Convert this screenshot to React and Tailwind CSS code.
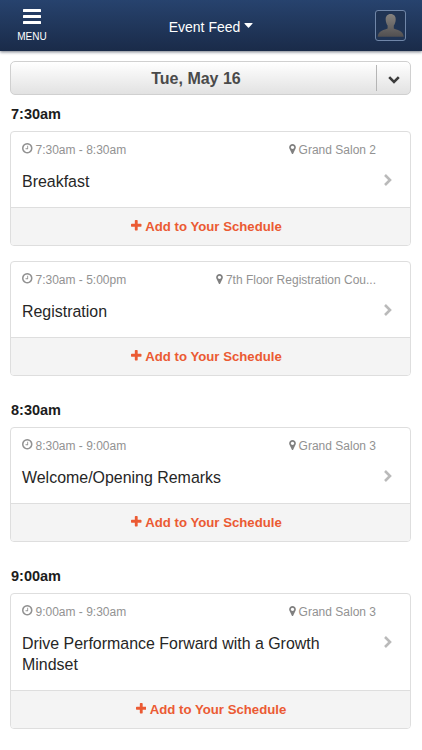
const groups = [
  {
    time: '7:30am',
    events: [
      { time: '7:30am - 8:30am', place: 'Grand Salon 2', title: 'Breakfast' },
      { time: '7:30am - 5:00pm', place: '7th Floor Registration Cou...', title: 'Registration' }
    ]
  },
  {
    time: '8:30am',
    events: [{ time: '8:30am - 9:00am', place: 'Grand Salon 3', title: 'Welcome/Opening Remarks' }]
  },
  {
    time: '9:00am',
    events: [{ time: '9:00am - 9:30am', place: 'Grand Salon 3', title: 'Drive Performance Forward with a Growth Mindset', wide: true }]
  }
]

const ClockIcon = () => (
  <svg viewBox="128 128 1536 1536" className="w-[10.5px] h-[10.5px] mb-[2px] shrink-0" fill="currentColor">
    <path d="M1024 544v448q0 14-9 23t-23 9h-320q-14 0-23-9t-9-23v-64q0-14 9-23t23-9h224v-352q0-14 9-23t23-9h64q14 0 23 9t9 23zm416 352q0-148-73-273t-198-198-273-73-273 73-198 198-73 273 73 273 198 198 273 73 273-73 198-198 73-273zm224 0q0 209-103 385.5t-279.5 279.5-385.5 103-385.5-103-279.5-279.5-103-385.5 103-385.5 279.5-279.5 385.5-103 385.5 103 279.5 279.5 103 385.5z" />
  </svg>
)

const MarkerIcon = () => (
  <svg viewBox="384 128 1024 1536" className="w-[7px] h-[10px] mb-[2px] shrink-0 text-[#808080]" fill="currentColor">
    <path d="M1152 640q0-106-75-181t-181-75-181 75-75 181 75 181 181 75 181-75 75-181zm256 0q0 109-33 179l-364 774q-16 33-47.5 52t-67.5 19-67.5-19-46.5-52l-365-774q-33-70-33-179 0-212 150-362t362-150 362 150 150 362z" />
  </svg>
)

const PlusIcon = () => (
  <svg viewBox="192 128 1408 1408" className="w-[10.5px] h-[10.5px] mb-[3px] shrink-0" fill="currentColor">
    <path d="M1600 736v192q0 40-28 68t-68 28h-416v416q0 40-28 68t-68 28h-192q-40 0-68-28t-28-68v-416h-416q-40 0-68-28t-28-68v-192q0-40 28-68t68-28h416v-416q0-40 28-68t68-28h192q40 0 68 28t28 68v416h416q40 0 68 28t28 68z" />
  </svg>
)

const Header = () => (
  <header className="h-[51px] flex items-center justify-between bg-linear-to-b from-[#27436e] to-[#1a2b49] text-white shadow-[0_1px_3px_rgba(20,30,50,0.6)]">
    <button className="w-16 h-full pt-[9px] flex flex-col items-center">
      <svg viewBox="0 0 18 15" className="w-[18px] h-[15px]" fill="currentColor">
        <rect width="18" height="3" rx="0.6" />
        <rect y="6" width="18" height="3" rx="0.6" />
        <rect y="12" width="18" height="3" rx="0.6" />
      </svg>
      <span className="mt-[6px] text-[10px] leading-[13px]">MENU</span>
    </button>
    <div className="flex items-center gap-1 pt-[3px] text-[14px]">
      <span>Event Feed</span>
      <svg viewBox="0 0 10 6" className="w-[9px] h-[5px] mb-[3px]" fill="currentColor">
        <path d="M0.6 0h8.8q.9.2.3 1L5.6 5.3q-.6.6-1.2 0L.3 1Q-.3.2.6 0z" />
      </svg>
    </div>
    <div className="w-16 flex justify-center">
      <div className="w-[31px] h-[31px] ml-[1px] rounded-[3px] border border-[#7086a8] bg-[#203454] overflow-hidden">
        <svg viewBox="0 0 29 29" className="w-full h-full">
          <defs>
            <linearGradient id="avatar" x1="0" y1="0" x2="0" y2="1">
              <stop offset="0" stopColor="#85827f" />
              <stop offset="1" stopColor="#514f50" />
            </linearGradient>
          </defs>
          <path d="M14.7 3c3.3 0 5.200 2.200 5 5.800-.1 2.600-.9 4.400-1.900 5.700v3c2.600 1.500 9.700 2 9.900 8.300H1.700c.2-6.300 7.300-6.800 9.900-8.300v-3c-1-1.300-1.800-3.100-1.900-5.700C9.500 5.200 11.400 3 14.700 3z" fill="url(#avatar)" />
        </svg>
      </div>
    </div>
  </header>
)

const DatePicker = () => (
  <div className="h-[34px] flex items-center rounded-[5px] border border-[#d0d0d0] bg-linear-to-b from-white to-[#e2e2e2]">
    <span className="flex-1 pl-[5px] pt-[2px] text-center text-[16px] font-bold text-[#4a4a4a]">Tue, May 16</span>
    <div className="w-[34px] h-[26px] flex items-center justify-center border-l border-[#b5b5b5]">
      <svg viewBox="0 0 12 8" className="w-3 h-2 mt-[3px]" fill="none" stroke="#3b3b3b" strokeWidth="2.6">
        <path d="M1.2 1.2L6 6l4.8-4.8" />
      </svg>
    </div>
  </div>
)

const EventCard = ({ time, place, title, wide }) => (
  <article className="rounded-[4px] border border-[#dedede] bg-white overflow-hidden">
    <div className="relative px-[11px] pt-[10px] pb-[15px]">
      <div className="h-[15px] pr-[23px] flex items-center justify-between text-[12px] text-[#929292]">
        <span className="flex items-center gap-[3px]"><ClockIcon />{time}</span>
        <span className="flex items-center gap-[3px]"><MarkerIcon />{place}</span>
      </div>
      <h3 className="mt-[14px] pr-[58px] text-[15.95px] leading-[21px] text-[#262626]">{title}</h3>
      <svg viewBox="0 0 8 12" className="absolute right-[18px] top-[42px] w-2 h-3" fill="none" stroke="#bababa" strokeWidth="2.6">
        <path d="M1 1l5 5-5 5" />
      </svg>
    </div>
    <button className={`${wide ? 'pl-px' : 'pr-[8px]'} w-full h-[38px] pt-px flex items-center justify-center gap-[3.5px] border-t border-[#dedede] bg-[#f4f4f4] text-[13.2px] font-bold text-[#eb5a33]`}>
      <PlusIcon />
      <span>Add to Your Schedule</span>
    </button>
  </article>
)

const App = () => (
  <div className="min-h-[750px] bg-white font-['Liberation_Sans',Arial,sans-serif]">
    <Header />
    <main className="pl-[10px] pr-[11px] pt-[10px]">
      <DatePicker />
      {groups.map(group => (
        <section key={group.time} className="pb-[15px]">
          <h2 className="h-[36px] pt-[9px] pl-px text-[14.5px] leading-[20px] font-bold text-[#1c1c1c]">{group.time}</h2>
          <div className="flex flex-col gap-[15px]">
            {group.events.map(event => <EventCard key={event.title} {...event} />)}
          </div>
        </section>
      ))}
    </main>
  </div>
)

export default App
